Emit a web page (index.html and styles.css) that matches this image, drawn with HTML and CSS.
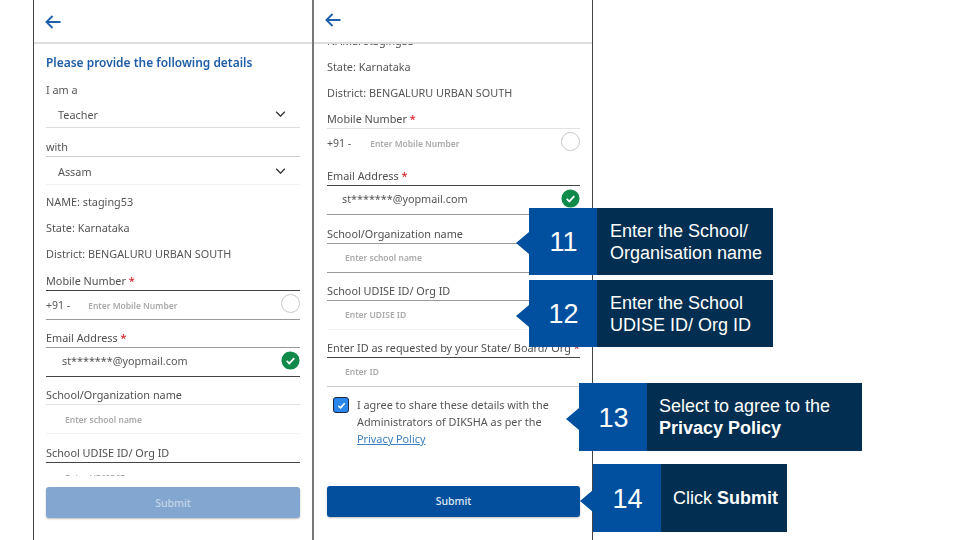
FILE: index.html
```html
<!DOCTYPE html>
<html lang="en">
<head>
<meta charset="utf-8">
<title>Profile details</title>
<link rel="stylesheet" href="styles.css">
</head>
<body>
<main class="stage">
  <section class="phone phone-a">
    <header class="bar"><svg class="back" viewBox="0 0 16 14"><path d="M15.5 7H1.5M7.5 1 1.5 7l6 6"/></svg></header>
    <div class="scroll">
      <h1 class="title">Please provide the following details</h1>
      <div class="row r-iam">I am a</div>
      <div class="row select s-teacher"><span>Teacher</span><svg class="chev" viewBox="0 0 12 7"><path d="M1 1l5 5 5-5"/></svg></div>
      <div class="row r-with">with</div>
      <div class="row select s-assam"><span>Assam</span><svg class="chev" viewBox="0 0 12 7"><path d="M1 1l5 5 5-5"/></svg></div>
      <div class="row info first">NAME: staging53</div>
      <div class="row info">State: Karnataka</div>
      <div class="row info">District: BENGALURU URBAN SOUTH</div>
      <div class="row label l24 dark">Mobile Number&nbsp;<b>*</b></div>
      <div class="row input mid"><span class="code">+91 -</span><span class="ph ph-mobile">Enter Mobile Number</span><i class="circle"></i></div>
      <div class="row label l28 mid">Email Address&nbsp;<b>*</b></div>
      <div class="row input dark"><span class="email">st*******@yopmail.com</span><svg class="ok" viewBox="0 0 20 20"><circle cx="10" cy="10" r="9.5"/><path d="M6 10.5l2.8 2.6L14 7.5"/></svg></div>
      <div class="row label l28 faint">School/Organization name</div>
      <div class="row input ghost"><span class="ph ph-in">Enter school name</span></div>
      <div class="row label l29 dark">School UDISE ID/ Org ID</div>
      <div class="row input ghost"><span class="ph ph-in">Enter UDISE ID</span></div>
    </div>
    <footer class="foot"><button class="submit off">Submit</button></footer>
  </section>

  <section class="phone phone-b">
    <header class="bar"><svg class="back" viewBox="0 0 16 14"><path d="M15.5 7H1.5M7.5 1 1.5 7l6 6"/></svg></header>
    <div class="scroll">
      <div class="scrolled">
        <div class="row info first">NAME: staging53</div>
        <div class="row info">State: Karnataka</div>
        <div class="row info">District: BENGALURU URBAN SOUTH</div>
        <div class="row label l23 faint">Mobile Number&nbsp;<b>*</b></div>
        <div class="row input none"><span class="code">+91 -</span><span class="ph ph-mobile">Enter Mobile Number</span><i class="circle"></i></div>
        <div class="row label l28 dark">Email Address&nbsp;<b>*</b></div>
        <div class="row input mid"><span class="email">st*******@yopmail.com</span><svg class="ok" viewBox="0 0 20 20"><circle cx="10" cy="10" r="9.5"/><path d="M6 10.5l2.8 2.6L14 7.5"/></svg></div>
        <div class="row label l29 mid">School/Organization name</div>
        <div class="row input mid"><span class="ph ph-in">Enter school name</span></div>
        <div class="row label l28 mid">School UDISE ID/ Org ID</div>
        <div class="row input ghost"><span class="ph ph-in">Enter UDISE ID</span></div>
        <div class="row label l28 dark">Enter ID as requested by your State/ Board/ Org&nbsp;<b>*</b></div>
        <div class="row input light"><span class="ph ph-in">Enter ID</span></div>
        <div class="agree">
          <span class="box"><svg viewBox="0 0 12 12"><path d="M2.5 6.5l2.5 2 4.5-5"/></svg></span>
          <p>I agree to share these details with the Administrators of DIKSHA as per the <a href="#">Privacy Policy</a></p>
        </div>
      </div>
    </div>
    <footer class="foot"><button class="submit">Submit</button></footer>
  </section>
</main>

<aside class="callout c11"><div class="num">11</div><div class="msg">Enter the School/ Organisation name</div></aside>
<aside class="callout c12"><div class="num">12</div><div class="msg">Enter the School<br>UDISE ID/ Org ID</div></aside>
<aside class="callout c13"><div class="num">13</div><div class="msg">Select to agree to the <strong>Privacy Policy</strong></div></aside>
<aside class="callout c14"><div class="num">14</div><div class="msg">Click <strong>Submit</strong></div></aside>
</body>
</html>
```

FILE: styles.css
```css
* { box-sizing: border-box; }
html, body { margin: 0; width: 960px; height: 540px; overflow: hidden; background: #fff; }
body { position: relative; font-family: "Noto Sans", sans-serif; color: #555; }

.stage { display: flex; padding-left: 33px; height: 540px; }
.phone { height: 540px; display: flex; flex-direction: column; overflow: hidden; filter: blur(0.5px); }
.phone-a { width: 279px; border-left: 1px solid #444; padding-left: 12px; padding-right: 12px; }
.phone-b { width: 281px; border-left: 2px solid #777; border-right: 1px solid #444; padding-left: 13px; padding-right: 12px; }

.bar { flex: none; height: 44px; margin: 0 -12px; border-bottom: 2px solid #dedede; display: flex; align-items: center; padding-left: 11px; padding-top: 2px; background: #fff; position: relative; z-index: 1; }
.phone-b .bar { margin: 0 -12px 0 -13px; padding-top: 0; padding-bottom: 2px; }
.back { width: 16px; height: 14px; fill: none; stroke: #1d5fa8; stroke-width: 1.9; }

.scroll { flex: 1; min-height: 0; overflow: hidden; }
.scrolled { margin-top: -20px; }

.title { margin: 0; height: 36px; display: flex; align-items: center; font-size: 11.95px; font-weight: 600; color: #1f5ea6; white-space: nowrap; }

.row { display: flex; align-items: center; font-size: 10.85px; white-space: nowrap; }
.row b { color: #d8303a; font-weight: 600; }
.r-iam { height: 20px; padding-bottom: 2px; }
.r-with { height: 29px; padding-top: 8px; border-bottom: 1px solid #ccc; }
.select { justify-content: space-between; padding: 1px 14px 0 12px; border-bottom: 1px solid #ddd; }
.s-teacher { height: 28px; }
.s-assam { height: 28px; border-bottom-color: #f2f2f2; }
.chev { width: 11px; height: 6px; fill: none; stroke: #333; stroke-width: 1.6; }

.info { height: 26px; padding-bottom: 2px; }
.info.first { margin-top: 4px; }

.label { align-items: flex-end; padding-bottom: 2px; color: #505050; border-bottom: 1px solid #888; }
.l23 { height: 23px; }
.l24 { height: 24px; }
.l28 { height: 28px; }
.l29 { height: 29px; }
.label.dark { border-bottom-color: #444; }
.label.mid { border-bottom-color: #999; }
.label.faint { border-bottom-color: #e2e2e2; }

.input { height: 29px; border-bottom: 1px solid #888; }
.input.dark { border-bottom-color: #444; }
.input.mid { border-bottom-color: #999; }
.input.light { border-bottom-color: #ccc; }
.input.ghost { border-bottom-color: #f3f3f3; }
.input.none { border-bottom-color: transparent; }

.code { color: #555; font-size: 10.5px; }
.ph { color: #aaa; font-size: 8.5px; font-weight: 600; }
.ph-mobile { margin-left: 18px; }
.phone-b .ph-mobile { margin-left: 19px; }
.ph-in { margin-left: 19px; }
.phone-b .ph-in { margin-left: 18px; margin-top: -2px; }
.email { margin-left: 16px; margin-top: -4px; font-size: 10.8px; }
.phone-b .email { margin-left: 15px; }
.circle { margin-left: auto; width: 19px; height: 19px; margin-top: -4px; border: 1.5px solid #c8c8c8; border-radius: 50%; }
.ok { margin-left: auto; width: 19px; height: 19px; margin-top: -3px; }
.ok circle { fill: #0f8a4a; }
.ok path { fill: none; stroke: #fff; stroke-width: 1.8; }

.agree { display: flex; gap: 8px; padding: 9px 0 0 6px; }
.box { flex: none; width: 16px; height: 16px; margin-top: 1px; background: #2a86ea; border: 1.5px solid #1a2a44; border-radius: 3px; display: flex; align-items: center; justify-content: center; }
.box svg { width: 11px; height: 11px; fill: none; stroke: #fff; stroke-width: 1.8; }
.agree p { margin: 0; font-size: 10.85px; line-height: 17px; width: 210px; }
.agree a { color: #3b80c4; }

.foot { flex: none; height: 64px; padding-top: 11px; background: #fff; }
.phone-b .foot { padding-top: 10px; }
.submit { display: block; width: 100%; height: 31px; border: 0; border-radius: 3px; padding: 0 0 2px; background: #034f9e; color: #dfe9f4; font: 500 10.5px "Noto Sans", sans-serif; box-shadow: 0 1px 2px rgba(0,0,0,.25); }
.submit.off { padding: 0; background: #82a6d0; color: #c4d5e8; }

.callout { position: absolute; display: flex; height: 67px; font-family: "Liberation Sans", Arial, sans-serif; color: #fff; }
.c11 { left: 529px; top: 208px; width: 244px; }
.c12 { left: 529px; top: 280px; width: 244px; }
.c13 { left: 579px; top: 383px; width: 283px; height: 68px; }
.c14 { left: 593px; top: 464px; width: 194px; height: 68px; }
.num { flex: none; width: 68px; background: #01509f; display: flex; align-items: center; justify-content: center; font-size: 27px; padding: 2px 0 0 1px; position: relative; }
.num::before { content: ""; position: absolute; left: -13px; top: 24px; width: 13px; height: 22px; background: #01509f; clip-path: polygon(100% 0, 0 50%, 100% 100%); }
.c12 .num::before, .c13 .num::before { top: 25px; }
.c14 .num::before { top: 26px; }
.msg { flex: 1; background: #012e51; padding: 12px 10px 0 13px; font-size: 18px; line-height: 22px; }
.c13 .msg { padding-left: 12px; }
.c14 .msg { padding: 23px 0 0 12px; }
```
